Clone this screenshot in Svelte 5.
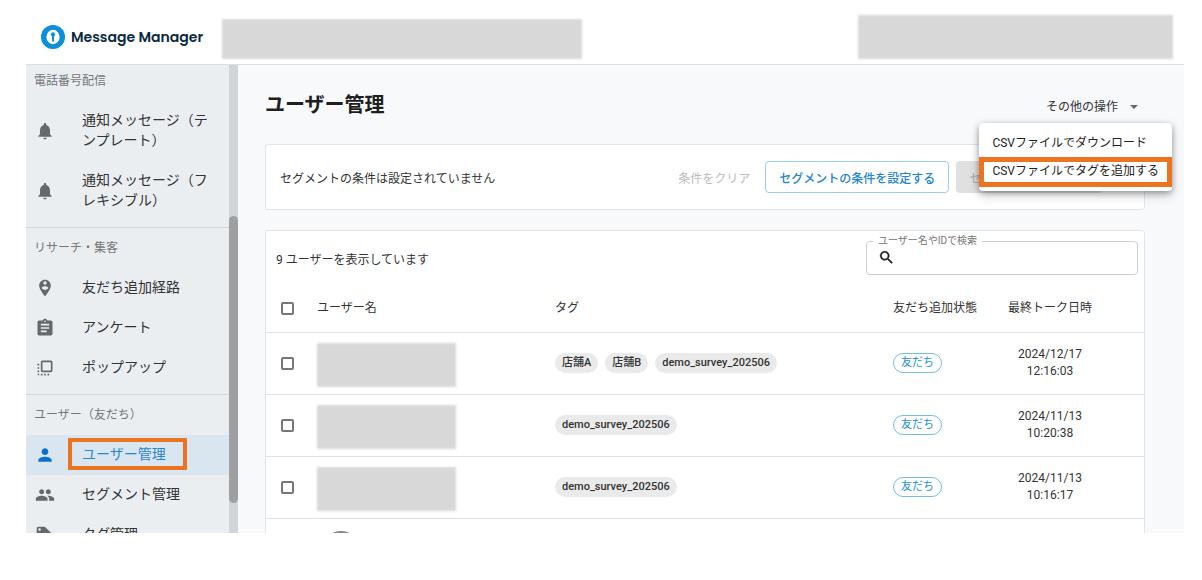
<script>
  const bell = 'M12 22c1.1 0 2-.9 2-2h-4c0 1.1.89 2 2 2zm6-6v-5c0-3.07-1.64-5.64-4.5-6.32V4c0-.83-.67-1.5-1.5-1.5s-1.5.67-1.5 1.5v.68C7.63 5.36 6 7.92 6 11v5l-2 2v1h16v-1l-2-2z';
  const pin = 'M12 2C8.14 2 5 5.14 5 9c0 5.25 7 13 7 13s7-7.75 7-13c0-3.86-3.14-7-7-7zm0 2c1.1 0 2 .9 2 2 0 1.11-.9 2-2 2s-2-.89-2-2c0-1.1.9-2 2-2zm0 10c-1.67 0-3.14-.85-4-2.15.02-1.32 2.67-2.05 4-2.05s3.98.73 4 2.05c-.86 1.3-2.33 2.15-4 2.15z';
  const clipboard = 'M19 3h-4.18C14.4 1.84 13.3 1 12 1c-1.3 0-2.4.84-2.82 2H5c-1.1 0-2 .9-2 2v14c0 1.1.9 2 2 2h14c1.1 0 2-.9 2-2V5c0-1.1-.9-2-2-2zm-7 0c.55 0 1 .45 1 1s-.45 1-1 1-1-.45-1-1 .45-1 1-1zm2 14H7v-2h7v2zm3-4H7v-2h10v2zm0-4H7V7h10v2z';
  const popup = 'M3 13h2v-2H3v2zm0 4h2v-2H3v2zm2 4v-2H3c0 1.1.89 2 2 2zM3 9h2V7H3v2zm12 12h2v-2h-2v2zm4-18H9c-1.11 0-2 .9-2 2v10c0 1.1.89 2 2 2h10c1.1 0 2-.9 2-2V5c0-1.1-.9-2-2-2zm0 12H9V5h10v10zm-8 6h2v-2h-2v2zm-4 0h2v-2H7v2z';
  const person = 'M12 12c2.21 0 4-1.79 4-4s-1.79-4-4-4-4 1.79-4 4 1.79 4 4 4zm0 2c-2.67 0-8 1.34-8 4v2h16v-2c0-2.66-5.33-4-8-4z';
  const people = 'M16 11c1.66 0 2.99-1.34 2.99-3S17.66 5 16 5c-1.66 0-3 1.34-3 3s1.34 3 3 3zm-8 0c1.66 0 2.99-1.34 2.99-3S9.66 5 8 5C6.34 5 5 6.34 5 8s1.34 3 3 3zm0 2c-2.33 0-7 1.17-7 3.5V19h14v-2.5c0-2.33-4.67-3.5-7-3.5zm8 0c-.29 0-.62.02-.97.05 1.16.84 1.97 1.97 1.97 3.45V19h6v-2.5c0-2.33-4.67-3.5-7-3.5z';
  const tag = 'M21.41 11.58l-9-9C12.05 2.22 11.55 2 11 2H4c-1.1 0-2 .9-2 2v7c0 .55.22 1.05.59 1.42l9 9c.36.36.86.58 1.41.58.55 0 1.05-.22 1.41-.59l7-7c.37-.36.59-.86.59-1.41 0-.55-.23-1.06-.59-1.42zM5.5 7C4.67 7 4 6.33 4 5.5S4.67 4 5.5 4 7 4.67 7 5.5 6.33 7 5.5 7z';

  const sections = [
    { title: '電話番号配信', items: [
      { label: '通知メッセージ（テンプレート）', icon: bell },
      { label: '通知メッセージ（フレキシブル）', icon: bell },
    ] },
    { title: 'リサーチ・集客', items: [
      { label: '友だち追加経路', icon: pin },
      { label: 'アンケート', icon: clipboard },
      { label: 'ポップアップ', icon: popup },
    ] },
    { title: 'ユーザー（友だち）', items: [
      { label: 'ユーザー管理', icon: person, active: true },
      { label: 'セグメント管理', icon: people },
      { label: 'タグ管理', icon: tag },
    ] },
  ];

  const users = [
    { tags: ['店舗A', '店舗B', 'demo_survey_202506'], date: '2024/12/17', time: '12:16:03' },
    { tags: ['demo_survey_202506'], date: '2024/11/13', time: '10:20:38' },
    { tags: ['demo_survey_202506'], date: '2024/11/13', time: '10:16:17' },
  ];
</script>

<div class="app">
  <header>
    <a class="brand" href="#home">
      <svg viewBox="0 0 24 24" width="24" height="24" aria-hidden="true">
        <circle cx="12" cy="12" r="12" fill="#0a8fd8" />
        <ellipse cx="12" cy="12" rx="6.6" ry="7.2" fill="#fff" />
        <circle cx="12" cy="9.4" r="2.1" fill="#0a8fd8" />
        <path d="M11 10h2v6.6h-2z" fill="#0a8fd8" />
      </svg>
      <span>Message Manager</span>
    </a>
    <div class="mask account"></div>
    <div class="mask profile"></div>
  </header>

  <div class="body">
    <div class="side">
      <nav>
        {#each sections as section}
          <section>
            <h2>{section.title}</h2>
            {#each section.items as item}
              <a class="item" class:active={item.active} href="#menu">
                <svg viewBox="0 0 24 24" width="20" height="20" aria-hidden="true"><path d={item.icon} /></svg>
                <span>{item.label}</span>
              </a>
            {/each}
          </section>
        {/each}
      </nav>
      <div class="track"><div class="thumb"></div></div>
    </div>

    <main>
      <div class="heading">
        <h1>ユーザー管理</h1>
        <button class="more" type="button">
          その他の操作
          <svg viewBox="0 0 8 4" width="8" height="4" aria-hidden="true"><path d="M0 0h8L4 4z" fill="#666" /></svg>
        </button>
        <div class="menu">
          <button type="button">CSVファイルでダウンロード</button>
          <button type="button" class="marked">CSVファイルでタグを追加する</button>
        </div>
      </div>

      <div class="panel segment">
        <p>セグメントの条件は設定されていません</p>
        <button type="button" class="clear" disabled>条件をクリア</button>
        <button type="button" class="set">セグメントの条件を設定する</button>
        <button type="button" class="save" disabled>セグメントとして保存</button>
      </div>

      <div class="panel users">
        <div class="toolbar">
          <p>9 ユーザーを表示しています</p>
          <fieldset>
            <legend><label for="search">ユーザー名やIDで検索</label></legend>
            <svg viewBox="0 0 24 24" width="17" height="17" aria-hidden="true"><path d="M15.5 14h-.79l-.28-.27C15.41 12.59 16 11.11 16 9.5 16 5.91 13.09 3 9.5 3S3 5.91 3 9.5 5.91 16 9.5 16c1.61 0 3.09-.59 4.23-1.57l.27.28v.79l5 4.99L20.49 19l-4.99-5zm-6 0C7.01 14 5 11.99 5 9.5S7.01 5 9.5 5 14 7.01 14 9.5 11.99 14 9.5 14z" fill="#222" stroke="#222" stroke-width="0.6" /></svg>
            <input id="search" type="text" />
          </fieldset>
        </div>
        <table>
          <thead>
            <tr>
              <th class="check"><input type="checkbox" aria-label="すべて選択" /></th>
              <th class="name">ユーザー名</th>
              <th>タグ</th>
              <th class="status">友だち追加状態</th>
              <th class="date">最終トーク日時</th>
            </tr>
          </thead>
          <tbody>
            {#each users as user}
              <tr>
                <td class="check"><input type="checkbox" aria-label="ユーザーを選択" /></td>
                <td><div class="mask person"></div></td>
                <td><div class="chips">{#each user.tags as t}<span class="chip">{t}</span>{/each}</div></td>
                <td><span class="friend">友だち</span></td>
                <td class="date">{user.date}<br />{user.time}</td>
              </tr>
            {/each}
            <tr>
              <td class="check"><input type="checkbox" aria-label="ユーザーを選択" /></td>
              <td><div class="avatar"></div></td>
              <td></td>
              <td></td>
              <td></td>
            </tr>
          </tbody>
        </table>
      </div>
    </main>
  </div>
</div>

<style>
  :global(body) {
    margin: 0;
    background: #fff;
  }
  .app {
    box-sizing: border-box;
    height: calc(100vh - 47px);
    margin: 0 18px 0 26px;
    display: flex;
    flex-direction: column;
    overflow: hidden;
    font-family: Roboto, "Noto Sans CJK JP", sans-serif;
    font-size: 12px;
    color: #333;
  }
  .app :is(h1, h2, p) {
    margin: 0;
  }
  button,
  input {
    font: inherit;
    color: inherit;
  }
  button {
    border: 0;
    background: none;
    white-space: nowrap;
  }
  header {
    flex: none;
    box-sizing: border-box;
    height: 65px;
    display: flex;
    align-items: flex-end;
    padding: 0 11px 5px 15px;
    border-bottom: 1px solid #dcdfe1;
  }
  .brand {
    width: 181px;
    flex: none;
    display: flex;
    align-items: center;
    gap: 6px;
    align-self: center;
    padding-top: 15px;
    height: 24px;
    color: #0b2a40;
    font: 600 14px/24px Poppins, Montserrat, "Open Sans", sans-serif;
    text-decoration: none;
    white-space: nowrap;
  }
  .mask {
    background: #d8d8d8;
    filter: blur(1px);
  }
  .account {
    width: 360px;
    height: 40px;
  }
  .profile {
    width: 315px;
    height: 44px;
    margin-left: auto;
  }
  .body {
    flex: 1;
    min-height: 0;
    display: flex;
  }
  .side {
    flex: none;
    width: 212px;
    display: flex;
    background: #ebeef1;
    overflow: hidden;
  }
  nav {
    flex: 1;
    margin-top: -4px;
  }
  section {
    padding-bottom: 6px;
  }
  section + section {
    border-top: 1px solid #d5d8db;
  }
  h2 {
    padding-left: 8px;
    font-size: 12px;
    font-weight: 400;
    line-height: 40px;
    color: #757779;
  }
  .item {
    display: flex;
    align-items: center;
    gap: 27px;
    padding: 9px 20px 9px 9px;
    color: #333;
    font-size: 14px;
    line-height: 20px;
    text-decoration: none;
  }
  .item svg {
    flex: none;
    fill: #66696b;
  }
  .item span {
    position: relative;
    padding-bottom: 2px;
  }
  .item.active {
    background: #dae6ef;
    color: #2a86d1;
  }
  .active svg {
    fill: #0970cd;
  }
  .active span::after {
    content: "";
    position: absolute;
    inset: -6px -21px -4px -14px;
    border: 4px solid #ec731f;
  }
  .track {
    width: 9px;
    background: #d2d5d8;
  }
  .thumb {
    height: 287px;
    margin-top: 151px;
    border-radius: 5px;
    background: #9fa0a1;
  }
  main {
    flex: 1;
    min-width: 0;
    padding: 0 39px 0 27px;
    background: #f7f9fb;
  }
  .heading {
    position: relative;
    height: 79px;
    display: flex;
    align-items: center;
    justify-content: space-between;
  }
  h1 {
    font-size: 20px;
    font-weight: 700;
    line-height: 30px;
    color: #1f1f1f;
  }
  .more {
    display: flex;
    align-items: center;
    gap: 12px;
    padding: 4px 7px 0;
    line-height: 20px;
  }
  .menu {
    position: absolute;
    z-index: 2;
    top: 58px;
    right: -27px;
    padding: 6px 0 4px;
    border-radius: 4px;
    background: #fff;
    box-shadow: 0 2px 6px rgb(0 0 0 / 35%), 0 5px 12px rgb(0 0 0 / 14%);
  }
  .menu button {
    display: block;
    width: 100%;
    padding: 0 13px;
    line-height: 28px;
    text-align: left;
    color: #222;
  }
  .menu .marked {
    position: relative;
    padding-bottom: 2px;
  }
  .marked::after {
    content: "";
    position: absolute;
    inset: 0;
    border: 5px solid #ec731f;
  }
  .panel {
    border: 1px solid #e3e5e7;
    border-radius: 3px;
    background: #fff;
  }
  .segment {
    display: flex;
    align-items: center;
    padding: 16px 42px 16px 14px;
    margin-bottom: 20px;
  }
  .segment p {
    margin-right: auto;
  }
  .segment button {
    height: 32px;
    padding: 0 13px;
    border-radius: 4px;
  }
  .segment .clear {
    margin-right: 2px;
    color: #bcbcbc;
  }
  .segment .set {
    margin-right: 7px;
    border: 1px solid #9ccbee;
    color: #2384d0;
    font-weight: 500;
  }
  .segment .save {
    background: #e0e0e0;
    color: #aaa;
  }
  .toolbar {
    display: flex;
    align-items: center;
    justify-content: space-between;
    height: 54px;
    padding: 0 6px 0 10px;
  }
  fieldset {
    box-sizing: border-box;
    width: 272px;
    height: 42px;
    margin: 0 0 8px;
    padding: 0 11px 8px;
    min-width: 0;
    display: flex;
    align-items: center;
    border: 1px solid #cfcfcf;
    border-radius: 4px;
  }
  legend {
    margin-left: -5px;
    padding: 0 5px;
    font-size: 10px;
    line-height: 16px;
    color: #757575;
  }
  fieldset input {
    flex: 1;
    min-width: 0;
    height: 20px;
    padding: 0 8px;
    border: 0;
    outline: 0;
    background: none;
  }
  table {
    width: 100%;
    table-layout: fixed;
    border-collapse: collapse;
  }
  th,
  td {
    box-sizing: border-box;
    padding: 0;
    border-bottom: 1px solid #e2e2e2;
    text-align: left;
    font-weight: 400;
    line-height: 17px;
  }
  th {
    height: 47px;
  }
  td {
    height: 62px;
  }
  .check {
    width: 51px;
    padding-left: 15px;
  }
  .name {
    width: 238px;
  }
  .status {
    width: 115px;
  }
  .date {
    width: 136px;
    padding-right: 52px;
    text-align: center;
    white-space: nowrap;
  }
  input[type="checkbox"] {
    appearance: none;
    display: block;
    box-sizing: border-box;
    width: 13px;
    height: 13px;
    margin: 0;
    border: 2px solid #777;
    border-radius: 2px;
  }
  .person {
    width: 139px;
    height: 44px;
    margin-top: 3px;
  }
  .avatar {
    width: 36px;
    height: 36px;
    margin-left: 6px;
    border-radius: 50%;
    background: #8b8a80;
  }
  .chips {
    display: flex;
    gap: 7px;
  }
  .chip {
    padding: 0 7px;
    border-radius: 10px;
    background: #eaeaea;
    font-size: 11px;
    font-weight: 500;
    line-height: 20px;
  }
  .friend {
    display: inline-block;
    padding: 0 7px;
    border: 1px solid #74bbe8;
    border-radius: 10px;
    color: #188fd8;
    font-size: 11px;
    line-height: 18px;
  }
</style>
